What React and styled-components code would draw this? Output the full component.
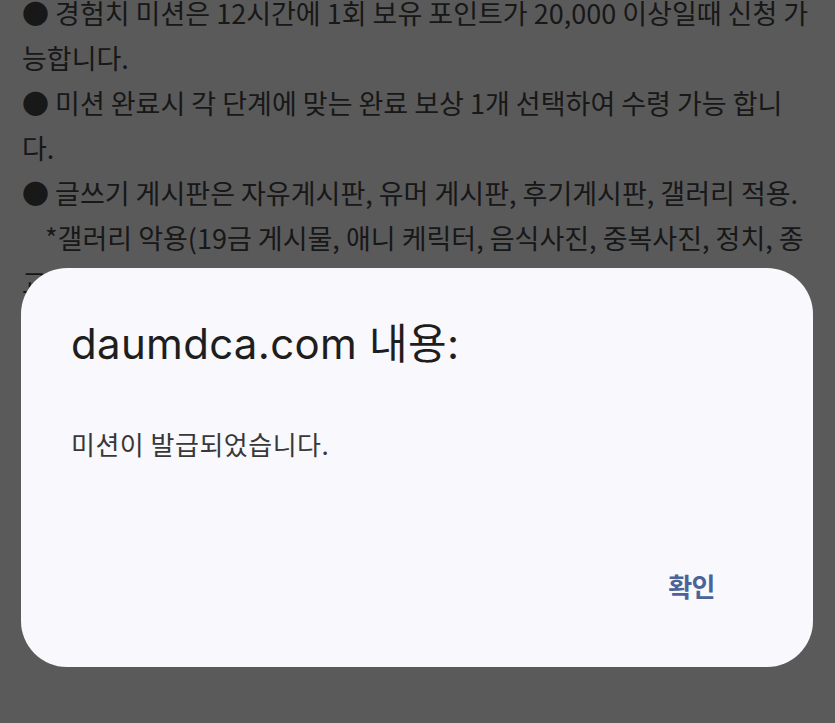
import styled, { createGlobalStyle } from "styled-components";

const GlobalStyle = createGlobalStyle`
  html, body {
    margin: 0;
    padding: 0;
    background: #ffffff;
    overflow: hidden;
  }
  * {
    box-sizing: border-box;
  }
`;

const notes = [
  ["● 경험치 미션은 12시간에 1회 보유 포인트가 20,000 이상일때 신청 가", "능합니다."],
  ["● 미션 완료시 각 단계에 맞는 완료 보상 1개 선택하여 수령 가능 합니", "다."],
  ["● 글쓰기 게시판은 자유게시판, 유머 게시판, 후기게시판, 갤러리 적용."],
];

const App = () => {
  return (
    <>
      <GlobalStyle />
      <Page>
        <Notice>
          {notes.map((lines, i) => (
            <Note key={i}>
              {lines.map((line, j) => (
                <Line key={j}>{line}</Line>
              ))}
            </Note>
          ))}
          <Note>
            <Line indent>*갤러리 악용(19금 게시물, 애니 케릭터, 음식사진, 중복사진, 정치, 종</Line>
            <Line>교, 광고 등) 게시물 작성시 미션 실패로 처리됩니다.</Line>
          </Note>
        </Notice>
      </Page>
      <Overlay>
        <Dialog role="alertdialog">
          <Title>daumdca.com 내용:</Title>
          <Message>미션이 발급되었습니다.</Message>
          <Actions>
            <OkButton>확인</OkButton>
          </Actions>
        </Dialog>
      </Overlay>
    </>
  );
};

const Page = styled.div`
  width: 835px;
  height: 723px;
  overflow: hidden;
  background: #ffffff;
`;

const Notice = styled.div`
  margin-top: -10px;
  padding-left: 22px;
  font-family: "Noto Sans CJK KR", "Noto Sans", sans-serif;
  font-size: 27px;
  line-height: 45px;
  color: #444444;
`;

const Note = styled.div``;

const Line = styled.div`
  white-space: nowrap;
  padding-left: ${(p) => (p.indent ? "23px" : "0")};
`;

const Overlay = styled.div`
  position: fixed;
  inset: 0;
  background: rgba(0, 0, 0, 0.647);
  display: flex;
  flex-direction: column;
  justify-content: flex-end;
  padding: 0 22px 56px 21px;
`;

const Dialog = styled.div`
  height: 399px;
  background: #f8f8fd;
  border-radius: 46px;
  display: flex;
  flex-direction: column;
  padding: 52px 98px 0 50px;
`;

const Title = styled.h2`
  margin: 0;
  font-family: Inter, "Noto Sans CJK KR", sans-serif;
  font-weight: 400;
  font-size: 42px;
  line-height: 48px;
  letter-spacing: 0.3px;
  color: #1e1e1e;
`;

const Message = styled.p`
  margin: 59px 0 0;
  font-family: "Noto Sans CJK KR", sans-serif;
  font-size: 26px;
  line-height: 34px;
  letter-spacing: 0.5px;
  color: #383838;
`;

const Actions = styled.div`
  margin-top: auto;
  padding-bottom: 64px;
  display: flex;
  justify-content: flex-end;
`;

const OkButton = styled.button`
  border: none;
  background: transparent;
  padding: 0;
  font-family: "Noto Sans CJK KR", sans-serif;
  font-size: 26px;
  font-weight: 700;
  line-height: 34px;
  letter-spacing: -0.5px;
  color: #4b6396;
  cursor: pointer;
`;

export default App;
